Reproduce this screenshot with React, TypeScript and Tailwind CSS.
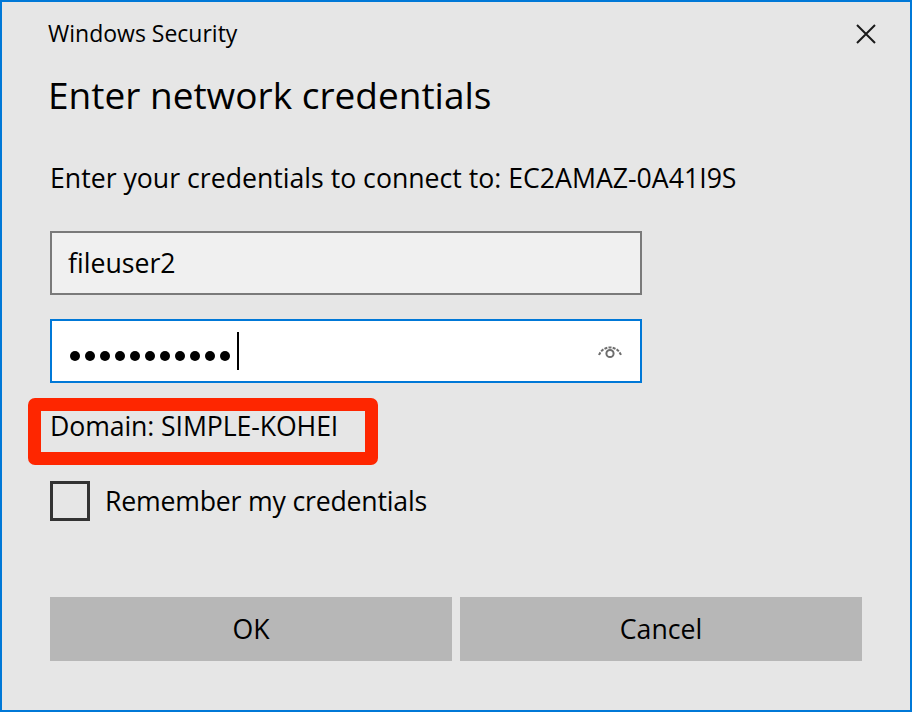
import React from "react"

const font = { fontFamily: '"Open Sans", "Noto Sans", sans-serif' }

const CloseIcon = () => (
    <svg width="20" height="20" viewBox="0 0 20 20" className="block">
        <path d="M1 1 L19 19 M19 1 L1 19" stroke="#1a1a1a" strokeWidth="2" />
    </svg>
)

const RevealIcon = () => (
    <svg width="26" height="18" viewBox="0 0 26 18" className="block">
        <path d="M2 13 C6 3, 20 3, 24 13" fill="none" stroke="#6e6e6e" strokeWidth="2" strokeDasharray="3 1.2" />
        <circle cx="13" cy="11.5" r="3.6" fill="none" stroke="#6e6e6e" strokeWidth="2" />
    </svg>
)

export default function App() {
    return (
        <div className="w-[912px] h-[714px] bg-white" style={font}>
            <div className="w-[912px] h-[712px] border-2 border-[#0078d7] bg-[#e6e6e6] text-black">
                {/* HEADER */}
                <div className="flex justify-between items-start pl-[46px] pr-[34px] pt-[15px]">
                    <div className="text-[23px] leading-[32px]">Windows Security</div>
                    <div className="pt-[7px]">
                        <CloseIcon />
                    </div>
                </div>

                <h1 className="pl-[46px] mt-[22px] text-[37px] leading-[48px] font-normal">
                    Enter network credentials
                </h1>

                <div className="pl-[48px] pr-[48px] mt-[41px]">
                    <p className="text-[26.67px] leading-[36px]">
                        Enter your credentials to connect to: EC2AMAZ-0A41I9S
                    </p>

                    {/* Username */}
                    <div className="mt-[35px] w-[592px] h-[64px] border-2 border-[#7a7a7a] bg-[#f0f0f0] flex items-center px-[16px]">
                        <span className="text-[26.67px] leading-[36px]">fileuser2</span>
                    </div>

                    {/* Password */}
                    <div className="mt-[24px] w-[592px] h-[64px] border-2 border-[#0078d7] bg-white flex items-center pl-[18px] pr-[16px]">
                        <div className="flex items-center gap-[5px] pt-[10px]">
                            {Array.from({ length: 11 }).map((_, i) => (
                                <span key={i} className="w-[10px] h-[10px] rounded-full bg-black" />
                            ))}
                        </div>
                        <span className="ml-[7px] w-[2px] h-[38px] bg-black" />
                        <div className="ml-auto pr-[1px]">
                            <RevealIcon />
                        </div>
                    </div>

                    {/* Domain */}
                    <div className="relative mt-[25px] w-fit">
                        <p className="text-[26.67px] leading-[36px] tracking-[-0.1px]">Domain: SIMPLE-KOHEI</p>
                        <div className="absolute left-[-22px] top-[-10px] w-[350px] h-[67px] border-[13px] border-[#fe2600] rounded-[7px]" />
                    </div>

                    {/* Remember */}
                    <label className="mt-[37px] flex items-center gap-[15px]">
                        <span className="w-[40px] h-[40px] border-[3px] border-[#333333]" />
                        <span className="text-[26.67px] leading-[36px] tracking-[-0.2px]">Remember my credentials</span>
                    </label>

                    {/* Buttons */}
                    <div className="mt-[76px] flex gap-[8px]">
                        <button className="w-[402px] h-[64px] bg-[#b7b7b7] text-[26.67px] leading-[36px]">OK</button>
                        <button className="w-[402px] h-[64px] bg-[#b7b7b7] text-[26.67px] leading-[36px]">Cancel</button>
                    </div>
                </div>
            </div>
        </div>
    )
}
